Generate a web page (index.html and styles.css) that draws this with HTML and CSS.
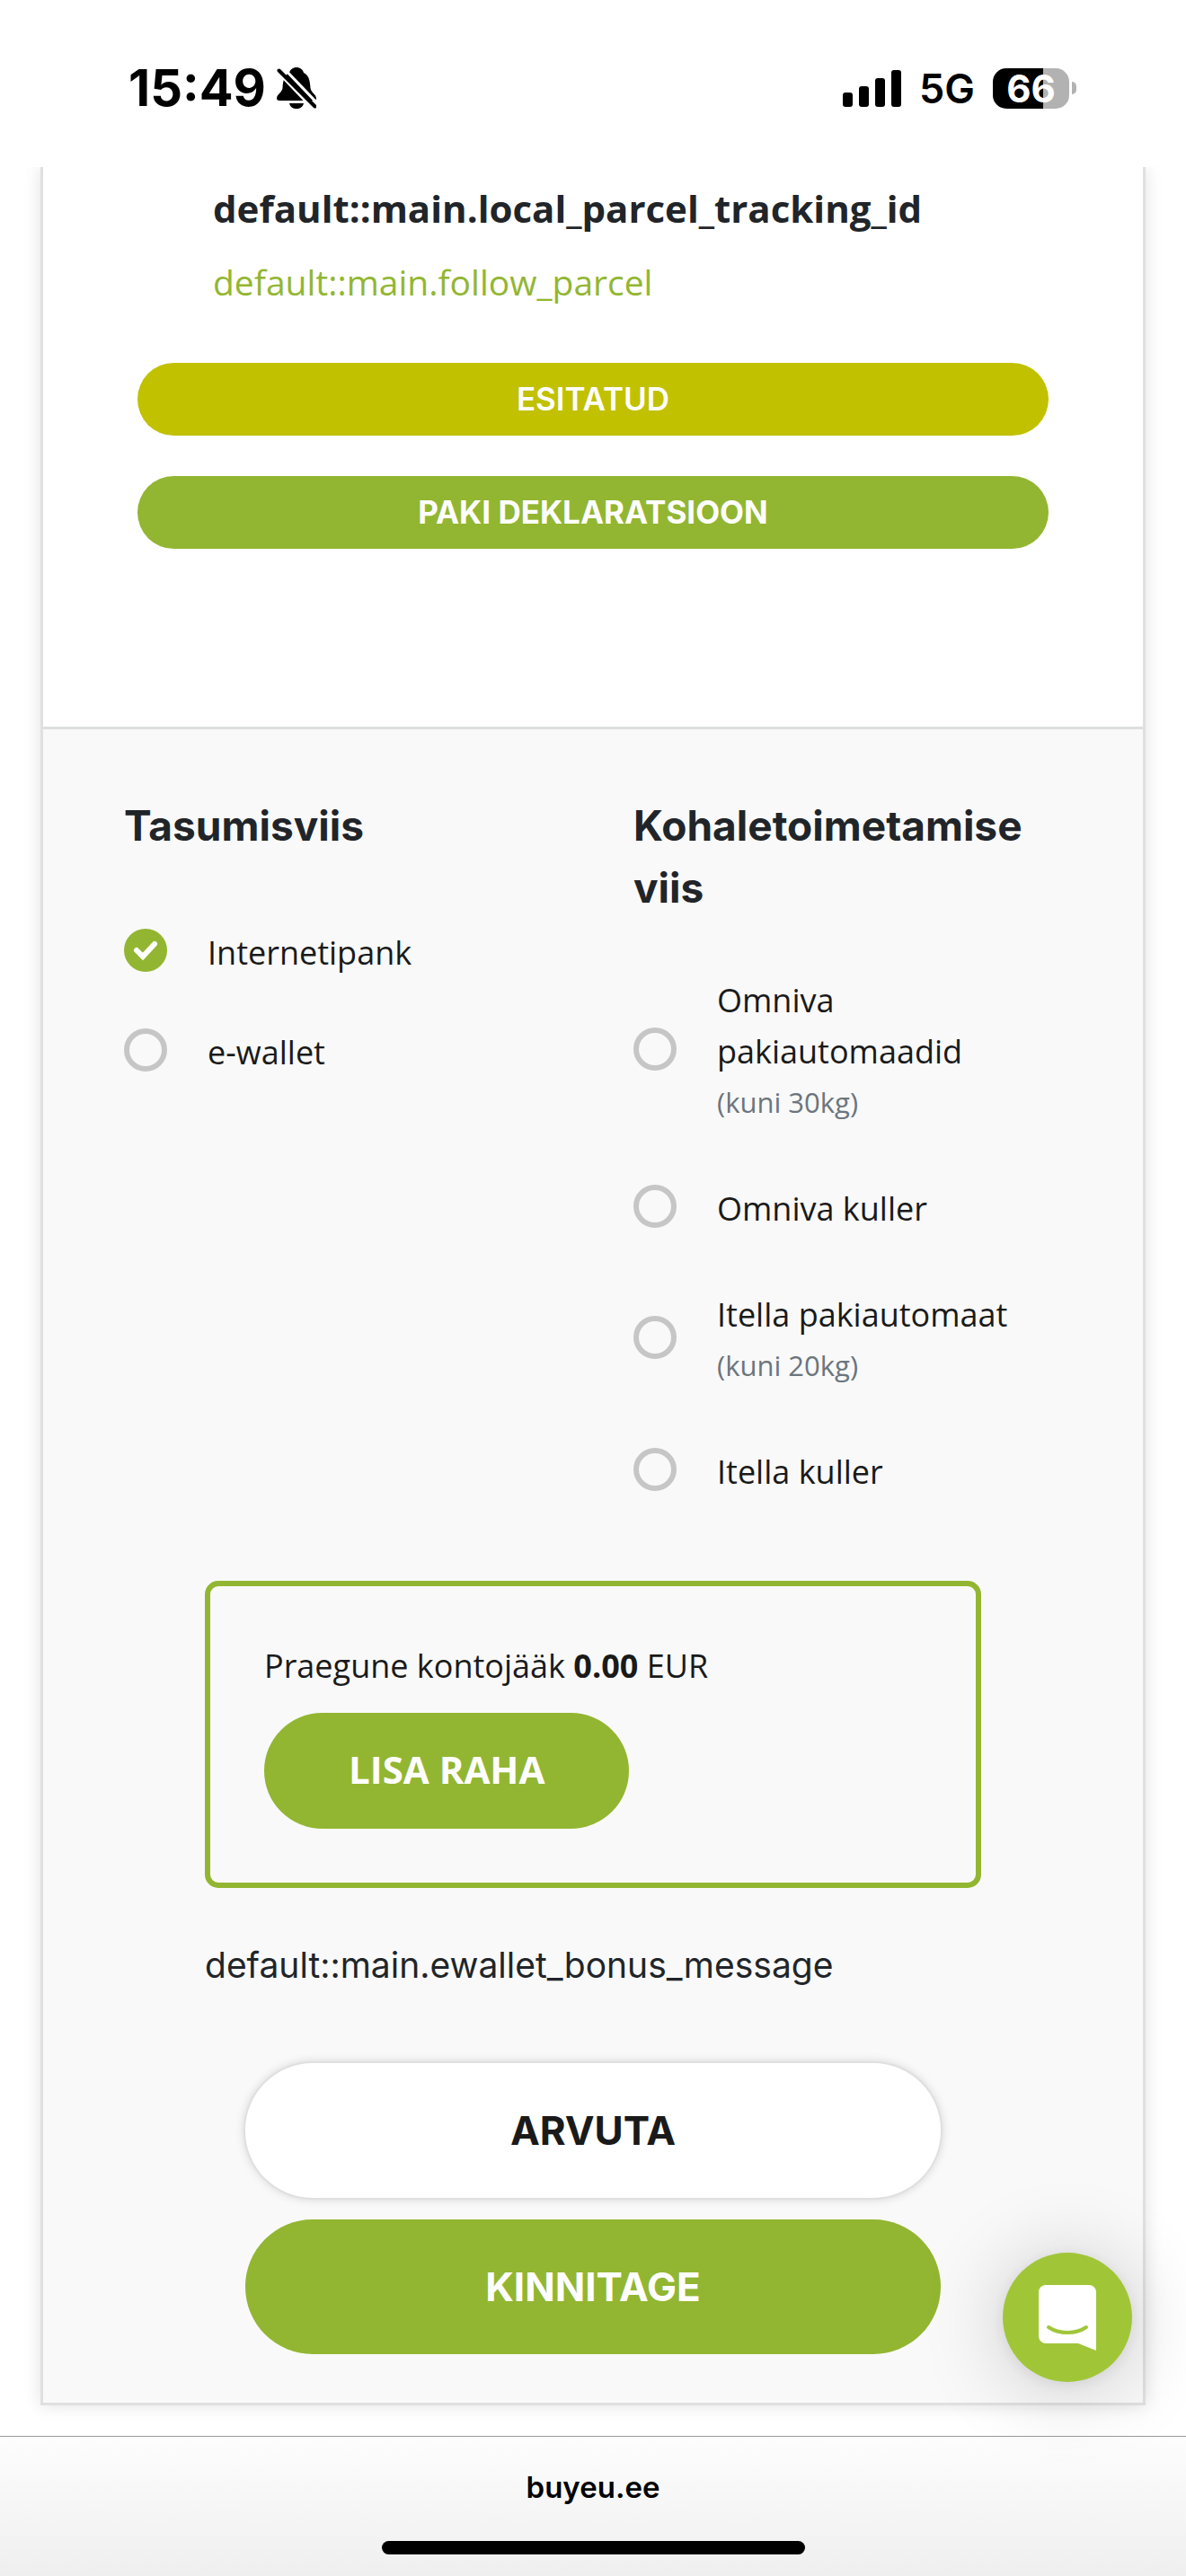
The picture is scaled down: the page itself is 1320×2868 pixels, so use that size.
FILE: index.html
```html
<!DOCTYPE html>
<html lang="et">
<head>
<meta charset="utf-8">
<meta name="viewport" content="width=device-width, initial-scale=1">
<title>buyeu.ee</title>
<link rel="stylesheet" href="styles.css">
</head>
<body>
<header class="status">
  <div class="status-left">
    <span class="time">15:49</span>
    <svg class="bell" viewBox="0 0 44 46" aria-hidden="true">
      <path d="M22 0c-4 0-7 2.500-8 6C8 9 7 15 6.500 23 6 28 0 30 0 34.500 0 36 1 37 3 37h38c2 0 3-1 3-2.500C44 30 38 28 37.500 23 37 15 36 9 30 6c-1-3.500-4-6-8-6zM14 40h16c-1 4-4 6-8 6s-7-2-8-6z"/>
      <path d="M-1 3 43 49M5-2 49 44" stroke="#fff" stroke-width="3"/>
      <path d="M2.500 3.500 42.500 43.500" stroke="#000" stroke-width="4" stroke-linecap="round"/>
    </svg>
  </div>
  <div class="status-right">
    <svg class="signal" viewBox="0 0 65 41" aria-hidden="true">
      <rect y="25" width="11" height="16" rx="3"/>
      <rect x="18" y="18" width="11" height="23" rx="3"/>
      <rect x="36" y="9" width="11" height="32" rx="3"/>
      <rect x="54" width="11" height="41" rx="3"/>
    </svg>
    <span class="network">5G</span>
    <span class="battery"><span class="battery-level">66</span><span class="battery-cap"></span></span>
  </div>
</header>

<main class="page">
  <article class="card">
    <section class="parcel">
      <h2 class="parcel-title">default::main.local_parcel_tracking_id</h2>
      <a class="parcel-link" href="#">default::main.follow_parcel</a>
      <div class="parcel-actions">
        <button class="pill pill-status" type="button">ESITATUD</button>
        <button class="pill pill-green" type="button">PAKI DEKLARATSIOON</button>
      </div>
    </section>

    <form class="checkout">
      <div class="options">
        <div class="group">
          <h3 class="group-title" id="payment">Tasumisviis</h3>
          <div class="choices choices-payment" role="radiogroup" aria-labelledby="payment">
            <label class="choice"><input class="radio" type="radio" name="payment" checked><span>Internetipank</span></label>
            <label class="choice"><input class="radio" type="radio" name="payment"><span>e-wallet</span></label>
          </div>
        </div>
        <div class="group">
          <h3 class="group-title" id="delivery">Kohaletoimetamise viis</h3>
          <div class="choices choices-delivery" role="radiogroup" aria-labelledby="delivery">
            <label class="choice"><input class="radio" type="radio" name="delivery"><span>Omniva pakiautomaadid <small class="limit">(kuni 30kg)</small></span></label>
            <label class="choice"><input class="radio" type="radio" name="delivery"><span>Omniva kuller</span></label>
            <label class="choice"><input class="radio" type="radio" name="delivery"><span>Itella pakiautomaat <small class="limit">(kuni 20kg)</small></span></label>
            <label class="choice"><input class="radio" type="radio" name="delivery"><span>Itella kuller</span></label>
          </div>
        </div>
      </div>

      <div class="wallet">
        <div class="balance">
          <p class="balance-text">Praegune kontojääk <b>0.00</b> EUR</p>
          <button class="add-money" type="button">LISA RAHA</button>
        </div>
        <p class="bonus">default::main.ewallet_bonus_message</p>
      </div>

      <div class="submit">
        <button class="big big-white" type="button">ARVUTA</button>
        <button class="big big-green" type="submit">KINNITAGE</button>
      </div>
    </form>
  </article>
</main>

<footer class="browser-bar">
  <span class="address">buyeu.ee</span>
  <span class="home-bar"></span>
</footer>

<button class="chat" type="button" aria-label="Chat">
  <svg class="chat-icon" viewBox="0 0 64 73" aria-hidden="true">
    <path fill="#fff" d="M8 0h48a8 8 0 0 1 8 8v65L44 65H8a8 8 0 0 1-8-8V8a8 8 0 0 1 8-8z"/>
    <path d="M11 47c12 8 30 8 42 0" fill="none" stroke="#a0c638" stroke-width="4" stroke-linecap="round"/>
  </svg>
</button>
</body>
</html>
```
FILE: styles.css
```css
* { box-sizing: border-box; }

body {
  margin: 0;
  min-height: 100vh;
  display: flex;
  flex-direction: column;
  background: #fff;
  color: #1a1a1a;
  font: 36px/57px "Open Sans", sans-serif;
}

h2, h3, p { margin: 0; }
button { border: 0; padding: 0; font: inherit; cursor: pointer; }

/* Phone status bar */
.status {
  position: relative;
  z-index: 1;
  height: 186px;
  padding: 0 122px 0 143px;
  display: flex;
  justify-content: space-between;
  background: #fff;
  color: #000;
  font-family: Inter, sans-serif;
}
.status-left, .status-right {
  display: flex;
  align-items: center;
  height: 196px;
}
.status-left { gap: 12px; }
.time { font-size: 56px; font-weight: 700; }
.bell { width: 44px; height: 46px; }
.signal { width: 65px; height: 41px; }
.network { margin: 0 20px; font-size: 45px; font-weight: 600; }
.battery { display: flex; align-items: center; gap: 3px; }
.battery-level {
  width: 85px;
  border-radius: 15px;
  background: linear-gradient(to right, #000 66%, #b2b2b2 66%);
  color: #fff;
  font-size: 42px;
  font-weight: 700;
  line-height: 45px;
  text-align: center;
}
.battery-cap {
  width: 5px;
  height: 14px;
  border-radius: 0 5px 5px 0;
  background: #b2b2b2;
}

/* Order card */
.page { flex: 1; padding: 0 45px 34px; }
.card {
  border: 3px solid #e0e0e0;
  border-top: 0;
  background: #fff;
  box-shadow: 0 0 18px rgba(0, 0, 0, 0.12);
}
.parcel { padding: 16px 105px 198px; color: #212529; }
.parcel-title {
  margin: 0 84px 22px;
  font-size: 42px;
  font-weight: 700;
  line-height: 60px;
}
.parcel-link {
  display: block;
  margin: 0 84px;
  color: #92b631;
  font-size: 39px;
  line-height: 60px;
  text-decoration: none;
}
.parcel-actions { display: grid; gap: 45px; margin-top: 60px; }
.pill {
  border-radius: 41px;
  color: #fff;
  font: 700 35px/81px Inter, sans-serif;
}
.pill-status { background: #c1c100; font-weight: 600; }
.pill-green { background: #92b631; }

.checkout {
  padding: 73px 90px 54px;
  border-top: 3px solid #dddfdf;
  background: #f9f9f9;
}
.options { display: grid; grid-template-columns: 1fr 1fr; gap: 90px; }
.group-title {
  color: #212529;
  font: 700 46px/69px Inter, sans-serif;
}
.choices { display: grid; }
.choices-payment { gap: 54px; margin-top: 78px; }
.choices-delivery { gap: 61px; margin-top: 62px; }
.choice { display: flex; align-items: center; gap: 45px; }
.radio {
  appearance: none;
  flex: none;
  width: 48px;
  height: 48px;
  margin: 0 0 6px;
  border: 6px solid #c6c6c6;
  border-radius: 50%;
}
.radio:checked {
  border: 0;
  background: #92b631 url("data:image/svg+xml,%3Csvg xmlns='http://www.w3.org/2000/svg' viewBox='0 0 48 48'%3E%3Cpath d='M14 24l7 7 13-14' fill='none' stroke='%23fff' stroke-width='6' stroke-linecap='round'/%3E%3C/svg%3E");
}
.limit { display: block; color: #6c757d; font-size: 31px; }

.wallet { margin: 93px 90px 0; }
.balance { padding: 60px; border: 6px solid #92b631; border-radius: 15px; }
.add-money {
  display: block;
  margin-top: 24px;
  padding: 0 94px 4px;
  border-radius: 65px;
  background: #92b631;
  color: #fff;
  font-size: 42px;
  font-weight: 700;
  line-height: 125px;
}
.bonus {
  margin-top: 57px;
  color: #212529;
  font-family: Inter, sans-serif;
  font-size: 39px;
}

.submit { display: grid; gap: 24px; margin: 81px 135px 0; }
.big {
  border-radius: 75px;
  font: 700 44px/150px Inter, sans-serif;
}
.big-white {
  background: #fff;
  color: #1a1a1a;
  box-shadow: 0 0 0 2px #e0e0e0, 0 0 12px rgba(0, 0, 0, 0.2);
}
.big-green { background: #92b631; color: #fff; }

/* Browser bottom bar */
.browser-bar {
  display: flex;
  flex-direction: column;
  align-items: center;
  gap: 36px;
  padding: 32px 0 24px;
  border-top: 1px solid #999;
  background: linear-gradient(#fdfdfd, #efefef);
  color: #000;
}
.address { font: 600 33px/48px Inter, sans-serif; }
.home-bar { width: 471px; height: 15px; border-radius: 8px; background: #000; }

.chat {
  position: fixed;
  right: 60px;
  bottom: 216px;
  width: 144px;
  height: 144px;
  display: grid;
  place-items: center;
  border-radius: 50%;
  background: #a0c638;
  box-shadow: 0 3px 18px rgba(0, 0, 0, 0.08), 0 6px 96px rgba(0, 0, 0, 0.2);
}
.chat-icon { width: 64px; height: 73px; }
```
